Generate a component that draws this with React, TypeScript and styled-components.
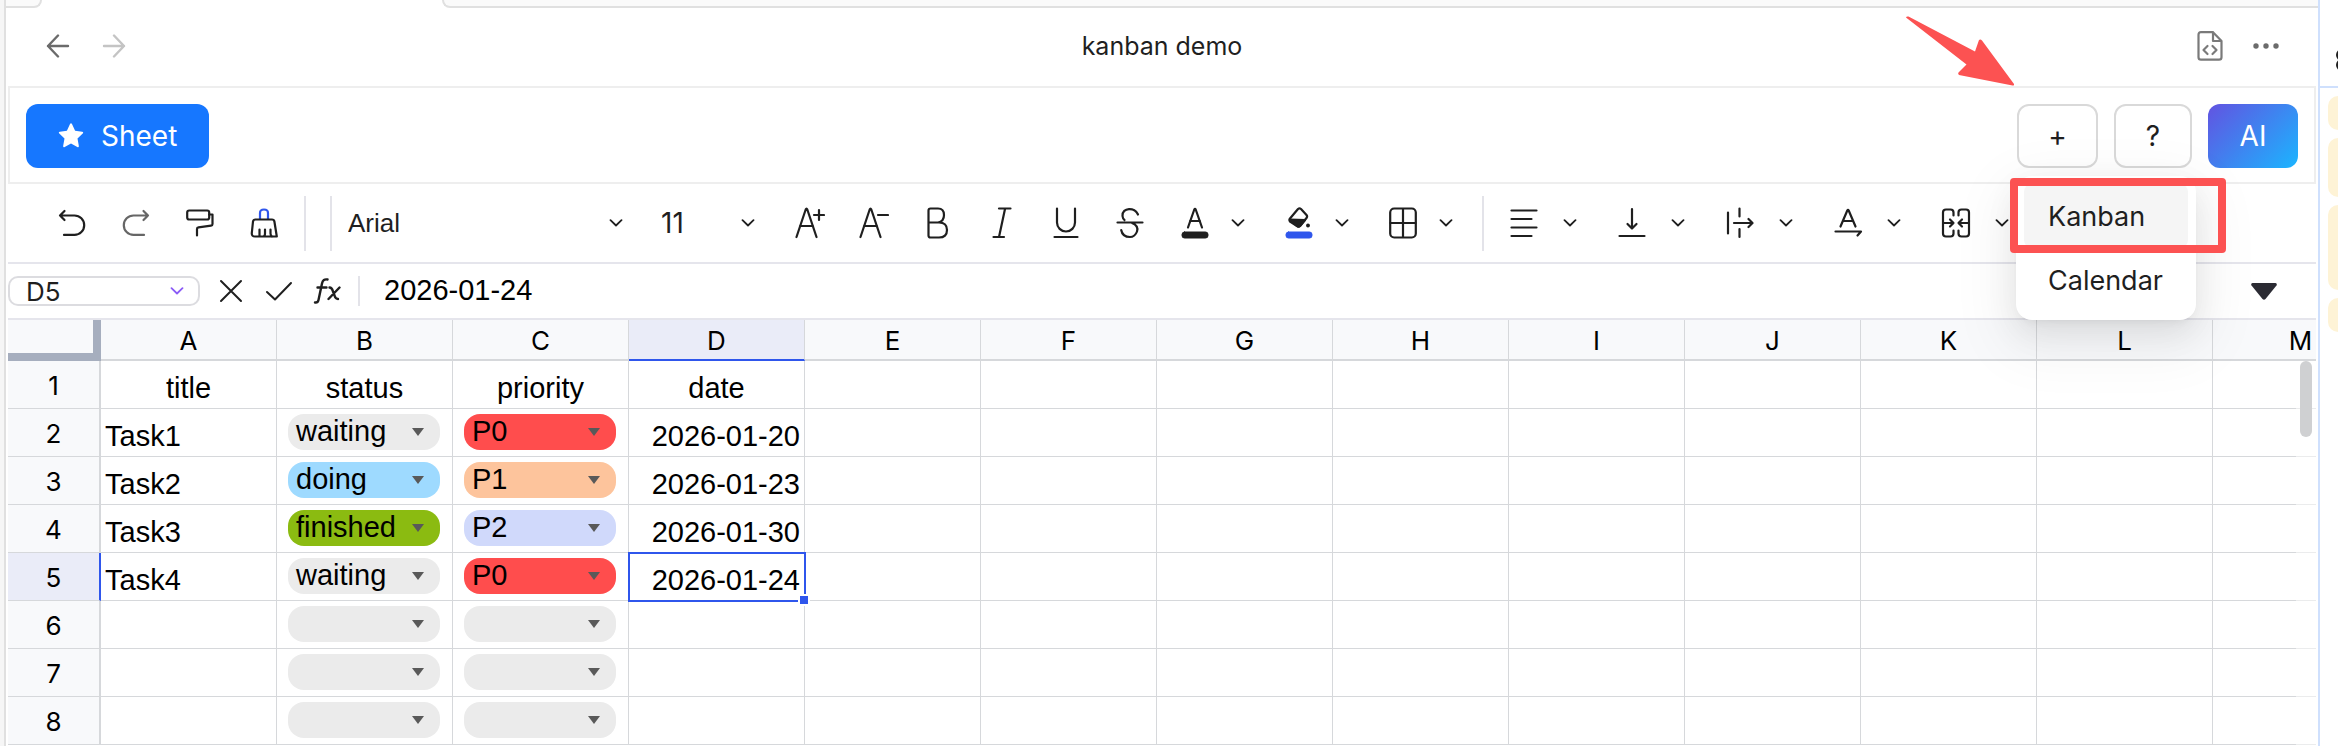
import React from 'react';
import styled, { createGlobalStyle, css } from 'styled-components';

const ui = 'Inter, "Liberation Sans", sans-serif';
const sheet = '"Liberation Sans", Arial, sans-serif';

const Global = createGlobalStyle`
  *, *::before, *::after { box-sizing: border-box; }
  html, body { margin: 0; overflow: hidden; background: #fff; }
  body { font-family: ${ui}; color: #1f1f1f; }
  button, input, select { color: inherit; margin: 0; padding: 0; font-family: inherit; }
`;

const Shell = styled.div`
  display: grid;
  grid-template-columns: 6px minmax(0, 1fr) 20px;
  height: 100vh;
  overflow: hidden;
`;

const LeftRail = styled.div`
  background: #f6f6f6;
  border-right: 2px solid #e0e0e0;
`;

const Main = styled.div`
  display: flex;
  flex-direction: column;
  min-width: 0;
`;

const TabStrip = styled.div`
  display: flex;
  justify-content: space-between;
  flex: none;
  height: 8px;
`;

const TabEdge = styled.div<{ $side: 'left' | 'right' }>`
  background: #fafafa;
  border-bottom: 2px solid #e0e0e0;
  ${p => p.$side === 'left'
    ? css`width: 36px; border-right: 2px solid #e0e0e0; border-bottom-right-radius: 8px;`
    : css`flex: 1; margin-left: 400px; border-left: 2px solid #e0e0e0; border-bottom-left-radius: 8px;`}
`;

const TitleBar = styled.header`
  display: grid;
  grid-template-columns: 1fr auto 1fr;
  align-items: center;
  flex: none;
  height: 78px;
  padding: 0 34px 2px;
`;

const IconGroup = styled.div<{ $end?: boolean; $gap: number }>`
  display: flex;
  align-items: center;
  gap: ${p => p.$gap}px;
  justify-content: ${p => (p.$end ? 'flex-end' : 'flex-start')};
`;

const Title = styled.h1`
  margin: 0;
  font-size: 25px;
  line-height: 32px;
  font-weight: 400;
`;

const IconButton = styled.button<{ $w?: number; $tone?: string }>`
  display: flex;
  flex: none;
  align-items: center;
  justify-content: center;
  width: ${p => p.$w ?? 36}px;
  height: 36px;
  border: 0;
  background: none;
  color: ${p => p.$tone ?? '#1f1f1f'};
`;

const Workspace = styled.div`
  display: flex;
  flex: 1;
  flex-direction: column;
  min-height: 0;
  margin: 0 2px;
`;

const ActionBar = styled.div`
  display: flex;
  align-items: center;
  justify-content: space-between;
  flex: none;
  height: 98px;
  padding: 2px 16px 0;
  border: 2px solid #eee;
`;

const SheetButton = styled.button`
  display: flex;
  align-items: center;
  gap: 17px;
  height: 64px;
  padding: 0 32px;
  border: 0;
  border-radius: 12px;
  background: #1677ff;
  color: #fff;
  font-size: 28px;
`;

const Actions = styled.div`
  display: flex;
  gap: 16px;
`;

const MenuAnchor = styled.div`
  position: relative;
`;

const ActionButton = styled.button<{ $w: number }>`
  width: ${p => p.$w}px;
  height: 64px;
  border: 2px solid #d9d9d9;
  border-radius: 12px;
  background: #fff;
  font-size: 28px;
`;

const AiButton = styled(ActionButton)`
  border: 0;
  background: linear-gradient(135deg, #6253e1 0%, #1bb5ff 100%);
  color: #fff;
`;

const Menu = styled.ul`
  position: absolute;
  z-index: 3;
  top: 72px;
  left: -1px;
  width: 180px;
  height: 144px;
  margin: 0;
  padding: 8px;
  list-style: none;
  background: #fff;
  border-radius: 16px;
  box-shadow: 0 12px 32px rgba(0, 0, 0, 0.08), 0 6px 12px -8px rgba(0, 0, 0, 0.12), 0 18px 56px 16px rgba(0, 0, 0, 0.05);
`;

const MenuItem = styled.button<{ $active?: boolean }>`
  display: block;
  width: 164px;
  height: 64px;
  padding: 0 24px;
  border: 0;
  border-radius: 8px;
  background: ${p => (p.$active ? '#f5f5f5' : 'transparent')};
  font-size: 27px;
  text-align: left;
`;

const Highlight = styled.div`
  position: absolute;
  z-index: 4;
  top: 74px;
  left: -7px;
  width: 216px;
  height: 75px;
  border: 8px solid #fc5252;
  border-radius: 4px;
`;

const Pointer = styled.svg`
  position: absolute;
  z-index: 4;
  top: -88px;
  left: -112px;
`;

const Toolbar = styled.div`
  display: flex;
  align-items: center;
  flex: none;
  height: 80px;
  padding: 0 0 0 46px;
  border-bottom: 2px solid #e5e5ec;
`;

const ToolGroup = styled.div<{ $gap: number; $ml?: number }>`
  display: flex;
  align-items: center;
  gap: ${p => p.$gap}px;
  margin-left: ${p => p.$ml ?? 0}px;
`;

const Rule = styled.span<{ $ml: number; $h?: number }>`
  flex: none;
  width: 2px;
  height: ${p => p.$h ?? 55}px;
  margin-left: ${p => p.$ml}px;
  background: #e3e3e9;
`;

const Picker = styled.div<{ $w: number; $ml: number; $font: string; $size: number }>`
  display: flex;
  flex: none;
  align-items: center;
  width: ${p => p.$w}px;
  margin-left: ${p => p.$ml}px;
  select {
    flex: 1;
    min-width: 0;
    height: 40px;
    border: 0;
    appearance: none;
    background: none;
    font-family: ${p => p.$font};
    font-size: ${p => p.$size}px;
  }
`;

const FormulaBar = styled.div`
  display: flex;
  align-items: center;
  flex: none;
  height: 56px;
  border-bottom: 2px solid #e5e5ec;
`;

const NameBox = styled.label`
  display: flex;
  align-items: center;
  width: 192px;
  height: 30px;
  padding: 0 14px 0 16px;
  border: 2px solid #dcdce0;
  border-radius: 10px;
  input {
    flex: 1;
    min-width: 0;
    height: 26px;
    border: 0;
    background: none;
    font-size: 26px;
  }
`;

const FormulaInput = styled.input`
  && {
    flex: 1;
    min-width: 0;
    height: 40px;
    margin-left: 24px;
    padding-bottom: 2px;
    border: 0;
    background: none;
    color: #000;
    font-family: ${sheet};
    font-size: 29px;
  }
`;

const GridArea = styled.div`
  position: relative;
  flex: 1;
  min-height: 0;
  overflow: hidden;
`;

const Table = styled.table`
  width: 2381px;
  table-layout: fixed;
  border-collapse: separate;
  border-spacing: 0;
  color: #000;
  font-family: ${sheet};
`;

const Corner = styled.th`
  width: 93px;
  height: 41px;
  padding: 0;
  background: #f8f9fb;
  border-right: 8px solid #a6aebe;
  border-bottom: 8px solid #a6aebe;
`;

const ColHead = styled.th<{ $on: boolean }>`
  width: 176px;
  height: 41px;
  padding: 2px 0 0;
  background: ${p => (p.$on ? '#eaecf8' : '#f8f9fb')};
  border-right: 1px solid #d6d8db;
  border-bottom: 2px solid ${p => (p.$on ? '#2f56ec' : '#d6d8db')};
  font-family: ${ui};
  font-size: 26px;
  font-weight: 400;
  line-height: 30px;
`;

const RowHead = styled.th<{ $on: boolean }>`
  height: 48px;
  padding: 1px 0 0;
  background: ${p => (p.$on ? '#eaecf8' : '#f8f9fb')};
  border-right: 2px solid ${p => (p.$on ? '#2f56ec' : '#d6d8db')};
  border-bottom: 1px solid #d6d8db;
  font-family: ${ui};
  font-size: 26px;
  font-weight: 400;
`;

const Cell = styled.td<{ $align: string }>`
  position: relative;
  height: 48px;
  padding: 8px 4px 0;
  border-right: 1px solid #d6d8db;
  border-bottom: 1px solid #d6d8db;
  font-size: 29px;
  line-height: 38px;
  text-align: ${p => p.$align};
  vertical-align: top;
  white-space: nowrap;
`;

const ChipCell = styled(Cell)`
  padding: 5px 11px 0;
`;

const Chip = styled.button<{ $bg: string }>`
  display: flex;
  align-items: center;
  justify-content: space-between;
  width: 152px;
  height: 36px;
  padding: 0 16px 0 8px;
  border: 0;
  border-radius: 16px;
  background: ${p => p.$bg};
  font-size: 29px;
  line-height: 34px;
`;

const ChipLabel = styled.span`
  height: 36px;
`;

const Selection = styled.span`
  position: absolute;
  z-index: 1;
  inset: -1px -2px -2px -1px;
  border: 2px solid #2f56ec;
  &::after {
    content: '';
    position: absolute;
    right: -6px;
    bottom: -6px;
    width: 12px;
    height: 12px;
    border: 2px solid #fff;
    background: #2f56ec;
  }
`;

const ScrollTrack = styled.div`
  position: absolute;
  top: 41px;
  right: 0;
  bottom: 0;
  width: 20px;
  background: rgba(255, 255, 255, 0.5);
`;

const ScrollThumb = styled.div`
  width: 12px;
  height: 76px;
  margin-left: 4px;
  border-radius: 6px;
  background: #cfd0d2;
`;

const SidePanel = styled.aside`
  display: flex;
  flex-direction: column;
  border-left: 2px solid #cfe0fd;
  overflow: hidden;
`;

const SideHead = styled.div`
  flex: none;
  height: 88px;
  padding: 50px 0 0 15px;
  border-bottom: 2px solid #cfe0fd;
`;

const SideCards = styled.div`
  display: flex;
  flex-direction: column;
  gap: 8px;
  padding: 8px 0 0 8px;
`;

const SideCard = styled.div<{ $h: number }>`
  height: ${p => p.$h}px;
  border-radius: 10px 0 0 10px;
  background: #fef3d6;
`;

const Svg = ({ w = 28, h = 28, sw = 2, children }: { w?: number; h?: number; sw?: number; children: React.ReactNode }) => (
  <svg width={w} height={h} viewBox={`0 0 ${w} ${h}`} fill="none" stroke="currentColor" strokeWidth={sw} strokeLinecap="round" strokeLinejoin="round" aria-hidden="true">
    {children}
  </svg>
);

const Chevron = ({ color = 'currentColor' }: { color?: string }) => (
  <svg width="14" height="8" viewBox="0 0 14 8" fill="none" stroke={color} strokeWidth="1.8" strokeLinecap="round" strokeLinejoin="round" aria-hidden="true">
    <path d="M1.500 1.200 7 6.500l5.500-5.300" />
  </svg>
);

const Triangle = () => (
  <svg width="12" height="8" viewBox="0 0 12 8" aria-hidden="true"><path d="M0 0h12L6 8z" fill="#595959" /></svg>
);

const icons: Record<string, React.ReactNode> = {
  undo: <Svg sw={2.2}><path d="M6.500 2 2 6.500 6.500 11M2 6.500h14.500a9.700 9.700 0 0 1 0 19.400H6" /></Svg>,
  redo: <Svg sw={2.2}><path d="M21.500 2 26 6.500 21.500 11M26 6.500H11.500a9.700 9.700 0 0 0 0 19.400H22" /></Svg>,
  roller: <Svg sw={2.2}><rect x="1.200" y="1.500" width="22" height="9" rx="2" /><path d="M23.200 5.500h3.300V15q0 1.500-1.500 1.700l-12.500 1.600q-1.500.2-1.500 1.700v6.500" /></Svg>,
  clean: <Svg h={32} sw={2.2}><path d="M10 12V6q0-3.500 4-3.500T18 6v6" stroke="#2f56ec" /><path d="M5.500 12.500H22q2 0 2.400 2l2.400 15H5q-3.500 0-3.200-3.500l1.200-11.500q.3-2 2.500-2zM9.500 22.500v6M15 22.500v4q0 3-2 3M20.500 22.500v4q0 2 1.500 3" /></Svg>,
  grow: <Svg w={30} h={32} sw={2.2}><path d="m1.500 30 9.200-27.500q.8-1.800 1.600 0L21.500 30M5 19h13M19 8h10M24 3v10" /></Svg>,
  shrink: <Svg w={30} h={32} sw={2.2}><path d="m1.500 30 9.200-27.500q.8-1.800 1.600 0L21.500 30M5 19h13M19 8h10" /></Svg>,
  bold: <Svg w={22} h={32} sw={2.2}><path d="M1.500 3.500q0-2 2-2H11q6 0 6 6.500t-6 7.500H1.500V3.500zM1.500 15.500H12q8 0 8 7.500t-8 7.500H3.500q-2 0-2-2z" /></Svg>,
  italic: <Svg w={20} h={32} sw={2.2}><path d="M7 1.500h11.500M1.500 30H12M13 2 7 30" /></Svg>,
  underline: <Svg w={26} h={32} sw={2.2}><path d="M4 1.500v14a9 9 0 0 0 18 0v-14M1.500 30h23" /></Svg>,
  strike: <Svg w={28} h={32} sw={2.2}><path d="M22 7.500C19 0 6 0 6.500 9q.3 3 2 4M1.500 15.500h25M16 16c10 4 4 14-2 14-5 0-8-2.500-8.800-7" /></Svg>,
  color: <Svg w={28} h={32} sw={2.2}><path d="m7 20.500 6.300-18q.7-1.500 1.400 0l6.300 18M9 14h10" /><rect x="1" y="25" width="26" height="6" rx="2.500" fill="currentColor" strokeWidth="1" /></Svg>,
  fill: <Svg w={28} h={32} sw={2.2}><path d="M13 2q1.500-1.200 3 0l5.500 6q1.200 1.500 0 3l-6.500 8q-1.500 1.500-3 0L5 14.500q-1.200-1.500 0-3z" /><path d="M5 12.500 20 13l-5 6q-1.500 1.500-3 0z" fill="currentColor" /><circle cx="23" cy="18.500" r="1.200" fill="currentColor" strokeWidth="1.500" /><rect x="1" y="25" width="26" height="6" rx="2.500" fill="#2f56ec" stroke="#2f56ec" strokeWidth="1" /></Svg>,
  borders: <Svg w={28} h={32} sw={2.2}><rect x="1.200" y="1.500" width="25.600" height="29" rx="4" /><path d="M14 2v28M1.500 16h25" /></Svg>,
  align: <Svg w={28} h={32} sw={2.2}><path d="M1.500 3.500h25M1.500 12h20M1.500 20.500h25M1.500 29h20" /></Svg>,
  bottom: <Svg w={28} h={32} sw={2.2}><path d="M14 2v19M9.500 17l4.500 4.500 4.500-4.500M1.500 29h25" /></Svg>,
  overflow: <Svg w={28} h={32} sw={2.2}><path d="M2 5.500v21M13.500 1.500v8M13.500 22v8M8 16h18M22.500 12l4 4-4 4" /></Svg>,
  rotate: <Svg w={30} h={32} sw={2.2}><path d="m7.500 19.500 6.800-16q.7-1.500 1.400 0l6.800 16M10 14h10M2.500 24.500H28l-3.500 4" /></Svg>,
  merge: <Svg w={30} h={32} sw={2.2}><path d="M12.500 8.500V5.500q0-3-3-3H5q-3 0-3 3v21q0 3 3 3h4.500q3 0 3-3v-3M17.500 8.500V5.500q0-3 3-3H25q3 0 3 3v21q0 3-3 3h-4.500q-3 0-3-3v-3M2 16h10.500M9 12.500l3.500 3.500L9 19.500M28 16H17.500M21 12.500 17.500 16l3.500 3.500" /></Svg>,
};

const TEXT_TOOLS = ['grow', 'shrink', 'bold', 'italic', 'underline', 'strike'];
const COLOR_TOOLS = ['color', 'fill', 'borders'];
const ALIGN_TOOLS = ['align', 'bottom', 'overflow', 'rotate', 'merge'];

const DropTool = styled.div<{ $gap: number }>`
  display: flex;
  align-items: center;
  gap: ${p => p.$gap}px;
`;

const COLS = ['A', 'B', 'C', 'D', 'E', 'F', 'G', 'H', 'I', 'J', 'K', 'L', 'M'];
const CHIP: Record<string, string> = {
  waiting: '#ebebeb', doing: '#9edaff', finished: '#8bbb11',
  P0: '#ff4d4d', P1: '#fdc49c', P2: '#d0d9fb', '': '#ebebeb',
};
const ROWS: string[][] = [
  ['title', 'status', 'priority', 'date'],
  ['Task1', 'waiting', 'P0', '2026-01-20'],
  ['Task2', 'doing', 'P1', '2026-01-23'],
  ['Task3', 'finished', 'P2', '2026-01-30'],
  ['Task4', 'waiting', 'P0', '2026-01-24'],
  [], [], [],
];

const alignOf = (row: number, col: number) => (row === 0 ? 'center' : col === 3 ? 'right' : 'left');

export default function App() {
  return (
    <>
      <Global />
      <Shell>
        <LeftRail />
        <Main>
          <TabStrip><TabEdge $side="left" /><TabEdge $side="right" /></TabStrip>
          <TitleBar>
            <IconGroup $gap={20}>
              <IconButton aria-label="Back" $tone="#6b6b6b"><Svg w={24} h={24} sw={2.4}><path d="M22 12H2M12 1.500 2 12l10 10.500" /></Svg></IconButton>
              <IconButton aria-label="Forward" $tone="#c4c4c4"><Svg w={24} h={24} sw={2.4}><path d="M2 12h20M12 1.500 22 12 12 22.500" /></Svg></IconButton>
            </IconGroup>
            <Title>kanban demo</Title>
            <IconGroup $end $gap={20}>
              <IconButton aria-label="View source" $tone="#7a7a7a">
                <Svg w={26} h={30} sw={2.2}><path d="M16 1.200H4q-2.500 0-2.500 2.500v22.500q0 2.500 2.500 2.500h18q2.500 0 2.500-2.500V10zM16 1.200V10h8.500M10.500 15l-4 4 4 4M15.500 15l4 4-4 4" /></Svg>
              </IconButton>
              <IconButton aria-label="More" $tone="#6b6b6b">
                <svg width="26" height="6" viewBox="0 0 26 6" fill="currentColor" aria-hidden="true"><circle cx="3" cy="3" r="2.700" /><circle cx="13" cy="3" r="2.700" /><circle cx="23" cy="3" r="2.700" /></svg>
              </IconButton>
            </IconGroup>
          </TitleBar>
          <Workspace>
            <ActionBar>
              <SheetButton>
                <svg width="26" height="26" viewBox="0 0 26 26" fill="#fff" aria-hidden="true"><path d="M11.900 1.200q1.100-1.700 2.200 0l3 6.600 7 .9q1.800.4.600 1.900l-5.200 5 1.300 7.200q.2 1.900-1.500 1.200L13 20.500 6.700 24q-1.700.7-1.500-1.200l1.300-7.200-5.200-5q-1.200-1.500.6-1.900l7-.9z" /></svg>
                Sheet
              </SheetButton>
              <Actions>
                <MenuAnchor>
                  <ActionButton $w={81} aria-label="Add view">+</ActionButton>
                  <Menu>
                    <li><MenuItem $active>Kanban</MenuItem></li>
                    <li><MenuItem>Calendar</MenuItem></li>
                  </Menu>
                  <Highlight />
                  <Pointer width="112" height="72" viewBox="0 0 112 72" aria-hidden="true">
                    <path d="M1 1.500Q1.500 0 3.500 .600L70 35.500 74 24q1.500-1 3 .5L109 68q.5 2-1.500 1.500L54 59q-1.500-1.500-.5-2.500L61.500 48.500z" fill="#fc5252" />
                  </Pointer>
                </MenuAnchor>
                <ActionButton $w={78}>?</ActionButton>
                <AiButton $w={90}>AI</AiButton>
              </Actions>
            </ActionBar>
            <Toolbar>
              <ToolGroup $gap={28}>
                <IconButton aria-label="Undo">{icons.undo}</IconButton>
                <IconButton aria-label="Redo" $tone="#666">{icons.redo}</IconButton>
                <IconButton aria-label="Format painter">{icons.roller}</IconButton>
                <IconButton aria-label="Clear format">{icons.clean}</IconButton>
              </ToolGroup>
              <Rule $ml={22} />
              <Rule $ml={24} />
              <Picker $w={275} $ml={16} $font={sheet} $size={26}>
                <select aria-label="Font" defaultValue="Arial"><option>Arial</option></select>
                <Chevron />
              </Picker>
              <Picker $w={94} $ml={38} $font={ui} $size={28}>
                <select aria-label="Font size" defaultValue="11"><option>11</option></select>
                <Chevron />
              </Picker>
              <ToolGroup $gap={28} $ml={37}>
                {TEXT_TOOLS.map(n => (
                  <IconButton key={n} aria-label={n}>{icons[n]}</IconButton>
                ))}
              </ToolGroup>
              <ToolGroup $gap={36} $ml={29}>
                {COLOR_TOOLS.map(n => (
                  <DropTool key={n} $gap={18}><IconButton aria-label={n}>{icons[n]}</IconButton><Chevron /></DropTool>
                ))}
              </ToolGroup>
              <Rule $ml={29} />
              <ToolGroup $gap={37} $ml={22}>
                {ALIGN_TOOLS.map(n => (
                  <DropTool key={n} $gap={21}><IconButton aria-label={n}>{icons[n]}</IconButton><Chevron /></DropTool>
                ))}
              </ToolGroup>
            </Toolbar>
            <FormulaBar>
              <NameBox><input aria-label="Cell" defaultValue="D5" /><Chevron color="#8b5cf6" /></NameBox>
              <ToolGroup $gap={12} $ml={13}>
                <IconButton aria-label="Cancel"><Svg w={24} h={24}><path d="m2 2 20 20M22 2 2 22" /></Svg></IconButton>
                <IconButton aria-label="Confirm"><Svg w={28} h={20}><path d="m2 11 8 7.500L26 2" /></Svg></IconButton>
                <IconButton aria-label="Insert function"><Svg w={28} h={26} sw={2.4}><path d="M14.500 1.500q-4.500-1-5.500 4L5.500 22q-.7 3-3.500 2.500M4.500 9.500h9M16.500 9.500q2.500 0 3.500 4l1.500 4q1 3.500 3.500 3.500M26.500 9.500 15.500 21" /></Svg></IconButton>
              </ToolGroup>
              <Rule $ml={13} $h={30} />
              <FormulaInput aria-label="Formula" defaultValue="2026-01-24" />
              <IconButton aria-label="Expand" $w={104}>
                <svg width="26" height="17" viewBox="0 0 26 17" aria-hidden="true"><path d="M1.500 0h23q2 .5 1 2.500L14.500 16q-1.500 1.500-3 0L.5 2.500Q-.5.5 1.500 0z" fill="#2b2b33" /></svg>
              </IconButton>
            </FormulaBar>
            <GridArea>
              <Table>
                <thead>
                  <tr><Corner aria-label="Select all" />{COLS.map(c => <ColHead key={c} $on={c === 'D'}>{c}</ColHead>)}</tr>
                </thead>
                <tbody>
                  {ROWS.map((row, r) => (
                    <tr key={r}>
                      <RowHead $on={r === 4}>{r + 1}</RowHead>
                      {COLS.map((c, i) => {
                        const v = row[i] ?? '';
                        if (r > 0 && (i === 1 || i === 2)) {
                          return (
                            <ChipCell key={c} $align="left">
                              <Chip $bg={CHIP[v]} aria-label={v || 'Choose'}><ChipLabel>{v}</ChipLabel><Triangle /></Chip>
                            </ChipCell>
                          );
                        }
                        return <Cell key={c} $align={alignOf(r, i)}>{v}{r === 4 && i === 3 && <Selection />}</Cell>;
                      })}
                    </tr>
                  ))}
                </tbody>
              </Table>
              <ScrollTrack><ScrollThumb /></ScrollTrack>
            </GridArea>
          </Workspace>
        </Main>
        <SidePanel>
          <SideHead><Svg w={20} h={20} sw={4}><circle cx="7" cy="5" r="4" /><circle cx="7" cy="15" r="4" /></Svg></SideHead>
          <SideCards><SideCard $h={34} /><SideCard $h={59} /><SideCard $h={85} /><SideCard $h={34} /></SideCards>
        </SidePanel>
      </Shell>
    </>
  );
}
